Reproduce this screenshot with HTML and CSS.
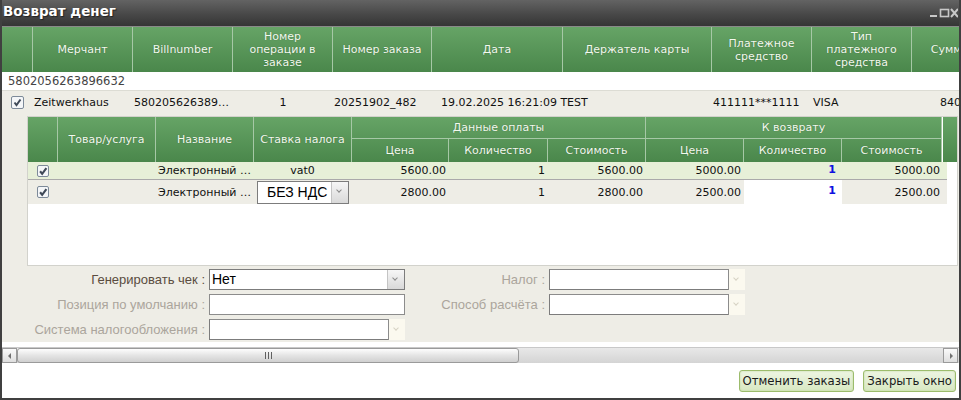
FILE: index.html
```html
<!DOCTYPE html>
<html lang="ru">
<head>
    <meta charset="UTF-8">
    <title>Возврат денег</title>
    <link rel="stylesheet" href="styles.css">
</head>
<body>
    <div class="window">
        <div class="titlebar">
            <span class="title">Возврат денег</span>
            <span class="controls">
                <svg width="28" height="10" viewBox="0 0 28 10">
                    <rect x="0" y="7" width="7" height="2" fill="#c8c8c8"/>
                    <rect x="10.5" y="1.5" width="8" height="7" fill="none" stroke="#c8c8c8" stroke-width="1.6"/>
                    <path d="M21 1 L28 9 M28 1 L21 9" stroke="#c8c8c8" stroke-width="2"/>
                </svg>
            </span>
        </div>

        <div class="grid-wrap">
            <div class="grid-inner">
                <div class="grid-head">
                    <div class="hcell"></div>
                    <div class="hcell">Мерчант</div>
                    <div class="hcell">Billnumber</div>
                    <div class="hcell">Номер операции в заказе</div>
                    <div class="hcell">Номер заказа</div>
                    <div class="hcell">Дата</div>
                    <div class="hcell">Держатель карты</div>
                    <div class="hcell">Платежное средство</div>
                    <div class="hcell">Тип платежного средства</div>
                    <div class="hcell">Сумма</div>
                </div>

                <div class="group-row">5802056263896632</div>

                <div class="grid-row">
                    <div class="cell center"><span class="check"></span></div>
                    <div class="cell">Zeitwerkhaus</div>
                    <div class="cell">580205626389…</div>
                    <div class="cell center">1</div>
                    <div class="cell">20251902_482</div>
                    <div class="cell wide">19.02.2025 16:21:09 TEST</div>
                    <div class="cell"></div>
                    <div class="cell">411111***1111</div>
                    <div class="cell">VISA</div>
                    <div class="cell sum">840</div>
                </div>

                <div class="detail">
                    <div class="items">
                        <div class="items-head">
                            <div class="ih span2"></div>
                            <div class="ih span2">Товар/услуга</div>
                            <div class="ih span2">Название</div>
                            <div class="ih span2">Ставка налога</div>
                            <div class="ih group pay">Данные оплаты</div>
                            <div class="ih group ret">К возврату</div>
                            <div class="ih span2 last"></div>
                            <div class="ih">Цена</div>
                            <div class="ih">Количество</div>
                            <div class="ih">Стоимость</div>
                            <div class="ih">Цена</div>
                            <div class="ih">Количество</div>
                            <div class="ih">Стоимость</div>
                        </div>

                        <div class="item-row selected">
                            <div class="ic center"><span class="check small"></span></div>
                            <div class="ic"></div>
                            <div class="ic">Электронный …</div>
                            <div class="ic center">vat0</div>
                            <div class="ic right">5600.00</div>
                            <div class="ic right">1</div>
                            <div class="ic right">5600.00</div>
                            <div class="ic right">5000.00</div>
                            <div class="ic right qty">1</div>
                            <div class="ic right">5000.00</div>
                        </div>

                        <div class="item-row">
                            <div class="ic center"><span class="check small"></span></div>
                            <div class="ic"></div>
                            <div class="ic">Электронный …</div>
                            <div class="ic">
                                <div class="combo vat">
                                    <span class="combo-text">БЕЗ НДС</span>
                                    <span class="combo-btn"></span>
                                </div>
                            </div>
                            <div class="ic right">2800.00</div>
                            <div class="ic right">1</div>
                            <div class="ic right">2800.00</div>
                            <div class="ic right">2500.00</div>
                            <div class="ic right qty edit">1</div>
                            <div class="ic right">2500.00</div>
                        </div>
                    </div>

                    <div class="receipt">
                        <label class="lbl">Генерировать чек :</label>
                        <div class="combo">
                            <span class="combo-text">Нет</span>
                            <span class="combo-btn"></span>
                        </div>
                        <label class="lbl off">Налог :</label>
                        <div class="combo off">
                            <span class="combo-text"></span>
                            <span class="combo-btn"></span>
                        </div>

                        <label class="lbl off">Позиция по умолчанию :</label>
                        <div class="field"></div>
                        <label class="lbl off">Способ расчёта :</label>
                        <div class="combo off">
                            <span class="combo-text"></span>
                            <span class="combo-btn"></span>
                        </div>

                        <label class="lbl off">Система налогообложения :</label>
                        <div class="combo off">
                            <span class="combo-text"></span>
                            <span class="combo-btn"></span>
                        </div>
                    </div>
                </div>
            </div>
        </div>

        <div class="hscroll">
            <span class="sbtn left"></span>
            <div class="track">
                <div class="thumb"><span class="grip"></span></div>
            </div>
            <span class="sbtn right"></span>
        </div>

        <div class="footer">
            <button class="btn">Отменить заказы</button>
            <button class="btn">Закрыть окно</button>
        </div>
    </div>
</body>
</html>
```

FILE: styles.css
```css
body {
    margin: 0;
    background-color: #ffffff;
    font-family: "DejaVu Sans", Verdana, sans-serif;
    font-size: 11px;
    color: #111;
}

.window {
    width: 961px;
    height: 400px;
    box-sizing: border-box;
    border: 2px solid #404040;
    border-top: none;
    background-color: #ffffff;
    display: flex;
    flex-direction: column;
    overflow: hidden;
}

.titlebar {
    height: 27px;
    flex: none;
    margin: 0 -2px;
    box-sizing: border-box;
    border-bottom: 1px solid #8a8a8a;
    background: linear-gradient(#636363, #484848 55%, #353535);
    display: flex;
    align-items: center;
    justify-content: space-between;
    padding: 0 3px 4px 3px;
}

.title {
    color: #ffffff;
    font-weight: bold;
    font-size: 13.5px;
    text-shadow: 1px 1px 1px #222;
}

.controls {
    display: flex;
    padding-top: 3px;
}

/* main grid */
.grid-wrap {
    flex: none;
    height: 315px;
    overflow: hidden;
}

.grid-inner {
    width: 1010px;
}

.grid-head,
.grid-row {
    display: grid;
    grid-template-columns: 31px 100px 100px 100px 99px 131px 149px 100px 100px 76px;
}

.grid-head {
    height: 45px;
    background: linear-gradient(#66a466, #4a874b);
}

.hcell {
    box-sizing: border-box;
    border-right: 1px solid #a6c8a6;
    color: #f2faee;
    text-align: center;
    display: flex;
    align-items: center;
    justify-content: center;
    padding: 0 4px;
    line-height: 13px;
    text-shadow: 0 0 1px rgba(0, 0, 0, 0.35);
}

.group-row {
    height: 18px;
    line-height: 18px;
    padding-left: 6px;
    font-size: 11.5px;
    color: #444;
    border-bottom: 1px solid #dcdcd4;
}

.grid-row {
    height: 22px;
    background-color: #eeede6;
}

.cell {
    display: flex;
    align-items: center;
    padding: 0 1px;
    white-space: nowrap;
    overflow: hidden;
}

.cell.wide {
    overflow: visible;
    padding-left: 9px;
}

.cell.sum {
    padding-left: 28px;
}

.center {
    justify-content: center;
}

.right {
    justify-content: flex-end;
}

.check {
    width: 11px;
    height: 11px;
    border: 1px solid #7d8a99;
    border-radius: 2px;
    background: #f4f6f8 url("data:image/svg+xml,%3Csvg xmlns='http://www.w3.org/2000/svg' width='11' height='11'%3E%3Cpath d='M2.5 5.5 L4.5 8 L8.5 2.5' fill='none' stroke='%23404a58' stroke-width='2'/%3E%3C/svg%3E") no-repeat center;
}

/* detail area */
.detail {
    background-color: #eeede6;
    padding: 3px 0 2px 25px;
}

.items {
    width: 931px;
    height: 150px;
    box-sizing: border-box;
    border: 1px solid #d2d2cc;
    background-color: #ffffff;
}

.items-head,
.item-row {
    display: grid;
    grid-template-columns: 30px 98px 98px 98px 97px 99px 98px 98px 98px 100px 1fr;
}

.items-head {
    grid-template-rows: 22px 23px;
    background: linear-gradient(#66a466, #4a874b);
}

.ih {
    box-sizing: border-box;
    border-right: 1px solid #a6c8a6;
    color: #f2faee;
    display: flex;
    align-items: center;
    justify-content: center;
    white-space: nowrap;
    text-shadow: 0 0 1px rgba(0, 0, 0, 0.35);
}

.ih.span2 {
    grid-row: span 2;
}

.ih.group {
    grid-column: span 3;
    border-bottom: 1px solid #a6c8a6;
}

.ih.pay {
    grid-column: 5 / span 3;
}

.ih.ret {
    grid-column: 8 / span 3;
}

.ih.last {
    grid-column: 11;
    grid-row: 1 / span 2;
    border-right: none;
    border-left: 1px solid #ffffff;
    margin-right: 1px;
}

.item-row {
    width: 919px;
    height: 24px;
    background-color: #eeede6;
}

.item-row.selected {
    height: 17px;
    background-color: #e7f0d8;
    border-bottom: 1px solid #aaaaaa;
}

.ic {
    display: flex;
    align-items: center;
    padding: 0 3px 0 2px;
    white-space: nowrap;
    overflow: hidden;
    color: #111;
}

.qty {
    color: #1010e0;
    font-weight: bold;
    padding-right: 6px;
    align-items: flex-start;
    padding-top: 1px;
}

.qty.edit {
    background-color: #ffffff;
    padding-top: 4px;
}

.item-row .ic:last-child {
    padding-right: 2px;
}

.check.small {
    width: 10px;
    height: 10px;
}

/* combos and fields */
.combo {
    display: flex;
    height: 21px;
    box-sizing: border-box;
    border: 1px solid #7c7c7c;
    background-color: #ffffff;
}

.combo-text {
    flex: 1;
    font-family: "Liberation Sans", Arial, sans-serif;
    font-size: 14px;
    line-height: 19px;
    padding-left: 2px;
    color: #000;
}

.combo-btn {
    width: 16px;
    border-left: 1px solid #c4c4c4;
    background: linear-gradient(#f6f6f6, #d9d9d9);
    position: relative;
}

.combo-btn::after {
    content: "";
    position: absolute;
    left: 5px;
    top: 6px;
    width: 3px;
    height: 3px;
    border-right: 1.5px solid #8a8a8a;
    border-bottom: 1.5px solid #8a8a8a;
    transform: rotate(45deg);
}

.combo.off {
    border-right: none;
    border-top-color: #8c8c8c;
}

.combo.off .combo-btn {
    background: #fbf9ef;
    border-left-color: #8c8c8c;
    margin: -1px 0;
}

.combo.off .combo-btn::after {
    top: 7px;
    border-color: #d6d2c4;
}

.combo.vat {
    width: 94px;
    height: 23px;
    margin-left: 1px;
}

.combo.vat .combo-text {
    line-height: 21px;
    padding-left: 9px;
}

.field {
    height: 21px;
    box-sizing: border-box;
    border: 1px solid #8c8c8c;
    background-color: #ffffff;
}

.receipt {
    display: grid;
    grid-template-columns: 176px 196px 136px 196px;
    grid-auto-rows: 21px;
    column-gap: 4px;
    row-gap: 4px;
    margin-left: -25px;
    padding: 3px 0 0 27px;
}

.receipt .combo,
.receipt .field {
    width: 196px;
}

.lbl {
    font-family: "Liberation Sans", Arial, sans-serif;
    font-size: 13px;
    color: #5a4c40;
    text-align: right;
    line-height: 21px;
    white-space: nowrap;
}

.lbl.off {
    color: #aba59c;
}

/* horizontal scrollbar */
.hscroll {
    flex: none;
    height: 16px;
    margin-top: 5px;
    display: flex;
    background: linear-gradient(#e8e8e8, #d4d4d4);
    border-top: 1px solid #c8c8c8;
    box-sizing: border-box;
}

.sbtn {
    width: 15px;
    box-sizing: border-box;
    border: 1px solid #9a9a9a;
    background: linear-gradient(#fafafa, #dedede);
    position: relative;
}

.sbtn::after {
    content: "";
    position: absolute;
    top: 4px;
    border-top: 3px solid transparent;
    border-bottom: 3px solid transparent;
}

.sbtn.left::after {
    left: 5px;
    border-right: 3px solid #707070;
}

.sbtn.right {
    margin-right: 1px;
}

.sbtn.right::after {
    left: 6px;
    border-left: 3px solid #707070;
}

.track {
    flex: 1;
}

.thumb {
    width: 502px;
    height: 15px;
    box-sizing: border-box;
    border: 1px solid #9a9a9a;
    border-radius: 3px;
    background: linear-gradient(#fdfdfd, #e4e4e4 50%, #d0d0d0);
    display: flex;
    align-items: center;
    justify-content: center;
}

.grip {
    width: 7px;
    height: 7px;
    background: repeating-linear-gradient(90deg, #606060 0 1px, transparent 1px 3px);
}

/* footer */
.footer {
    flex: 1;
    display: flex;
    justify-content: flex-end;
    align-items: flex-start;
    gap: 9px;
    padding: 7px 3px 0 0;
}

.btn {
    height: 22px;
    padding: 0 3px;
    font-family: "DejaVu Sans", Verdana, sans-serif;
    font-size: 11.7px;
    color: #1a1a1a;
    border: 1px solid #9cbc6c;
    border-radius: 3px;
    background: linear-gradient(#edf5e2, #d8e8c2);
    box-shadow: inset 0 0 2px #bcd49a;
    cursor: pointer;
}
```
